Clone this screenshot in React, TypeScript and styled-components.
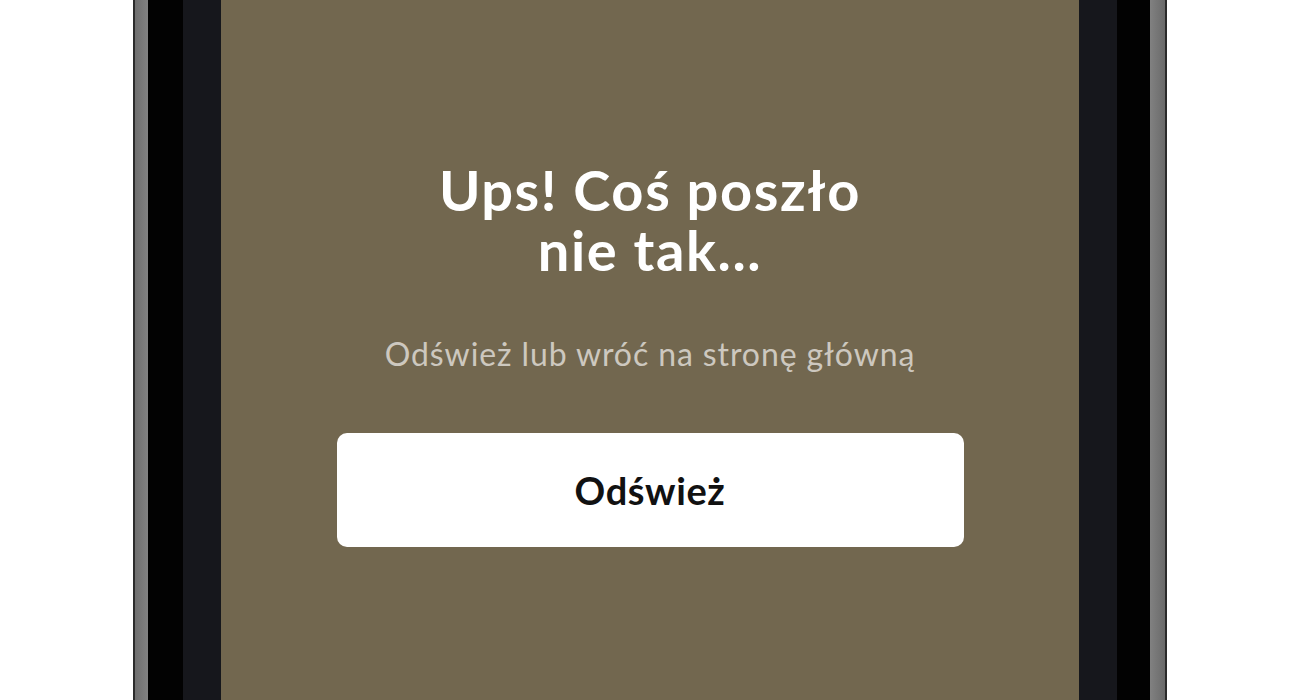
import React from 'react';
import styled, { createGlobalStyle } from 'styled-components';

const GlobalStyle = createGlobalStyle`
  html, body {
    margin: 0;
    padding: 0;
    background: #ffffff;
    overflow: hidden;
  }
  body {
    font-family: Lato, "Noto Sans", "Liberation Sans", sans-serif;
  }
`;

const Page = styled.div`
  display: flex;
  height: 700px;
  padding-left: 133px;
`;

// metal rim of the handset
const Rim = styled.div`
  display: flex;
  padding: 0 15px 0 13px;
  border-left: 2px solid #2b2b2b;
  border-right: 2px solid #2b2b2b;
  background: linear-gradient(
    90deg,
    #6f6f6f 0%,
    #c8c8c8 6%,
    #b2b2b2 50%,
    #c8c8c8 94%,
    #6a6a6a 100%
  );
`;

const Band = styled.div`
  display: flex;
  padding: 0 33px 0 35px;
  background: #020202;
`;

const Bezel = styled.div`
  display: flex;
  padding: 0 38px;
  background: #16171c;
`;

const Screen = styled.main`
  width: 858px;
  background: #72674f;
  display: flex;
  flex-direction: column;
  align-items: center;
  padding-top: 160px;
  box-sizing: border-box;
`;

const Title = styled.h1`
  margin: 0;
  color: #ffffff;
  font-size: 56px;
  font-weight: 700;
  line-height: 60px;
  text-align: center;
  letter-spacing: 1.6px;
`;

const Hint = styled.p`
  margin: 54px 0 0;
  color: #cdc8bf;
  font-size: 32px;
  font-weight: 400;
  line-height: 40px;
  text-align: center;
  letter-spacing: 0.9px;
`;

const RefreshButton = styled.button`
  margin-top: 59px;
  width: 627px;
  height: 114px;
  border: none;
  border-radius: 10px;
  background: #ffffff;
  color: #111111;
  font-family: inherit;
  font-size: 38px;
  font-weight: 700;
  letter-spacing: 0.6px;
  cursor: pointer;
`;

export default function App() {
  return (
    <>
      <GlobalStyle />
      <Page>
        <Rim>
          <Band>
            <Bezel>
              <Screen>
                <Title>
                  Ups! Coś poszło
                  <br />
                  nie tak...
                </Title>
                <Hint>Odśwież lub wróć na stronę główną</Hint>
                <RefreshButton type="button">Odśwież</RefreshButton>
              </Screen>
            </Bezel>
          </Band>
        </Rim>
      </Page>
    </>
  );
}
